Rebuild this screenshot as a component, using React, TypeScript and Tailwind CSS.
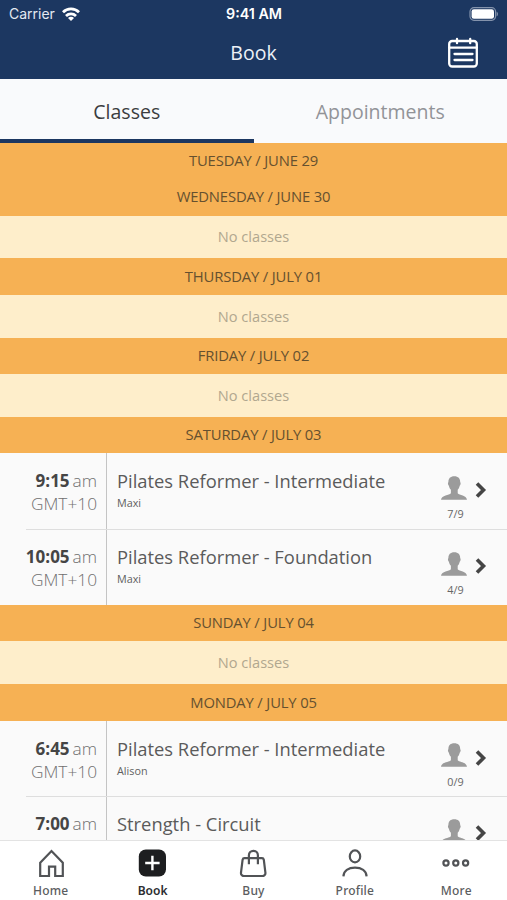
import type { ReactNode } from 'react'

type ClassItem = {
  time: string
  zone?: string
  title: string
  teacher?: string
  booked?: string
}

type Day = {
  label: string
  classes?: ClassItem[]
  hideEmpty?: boolean
}

const days: Day[] = [
  { label: 'TUESDAY / JUNE 29', hideEmpty: true },
  { label: 'WEDNESDAY / JUNE 30' },
  { label: 'THURSDAY / JULY 01' },
  { label: 'FRIDAY / JULY 02' },
  {
    label: 'SATURDAY / JULY 03',
    classes: [
      { time: '9:15', zone: 'GMT+10', title: 'Pilates Reformer - Intermediate', teacher: 'Maxi', booked: '7/9' },
      { time: '10:05', zone: 'GMT+10', title: 'Pilates Reformer - Foundation', teacher: 'Maxi', booked: '4/9' },
    ],
  },
  { label: 'SUNDAY / JULY 04' },
  {
    label: 'MONDAY / JULY 05',
    classes: [
      { time: '6:45', zone: 'GMT+10', title: 'Pilates Reformer - Intermediate', teacher: 'Alison', booked: '0/9' },
      { time: '7:00', title: 'Strength - Circuit' },
    ],
  },
]

export default function App() {
  return (
    <div className="flex h-[900px] w-[507px] flex-col overflow-hidden bg-white font-['Open_Sans',sans-serif]">
      <Header />
      <Tabs />
      <main className="min-h-0 flex-1 overflow-hidden bg-[#fafafa]">
        {days.map((day) => (
          <section key={day.label}>
            <h2 className="flex h-[36.5px] items-center justify-center bg-[#f6b154] pb-[1.4px] text-[14.8px] tracking-[-0.15px] text-[#65502f]">
              {day.label}
            </h2>
            {day.classes?.map((item, i) => (
              <ClassRow key={item.time} item={item} divided={i > 0} />
            ))}
            {!day.classes && !day.hideEmpty && (
              <p className="flex h-[42.8px] items-center justify-center bg-[#feeecb] pt-[0.6px] text-[14.6px] text-[#b1a78f]">
                No classes
              </p>
            )}
          </section>
        ))}
      </main>
      <TabBar />
    </div>
  )
}

function Header() {
  return (
    <header className="h-[79px] shrink-0 bg-[#1c3761] text-white">
      <div className="grid h-[27px] grid-cols-3 items-center px-[9px] font-[Inter,sans-serif] text-[14px]">
        <div className="flex items-center gap-[7px] text-[#e4e9f1]">
          Carrier
          <WifiIcon />
        </div>
        <p className="pl-px text-center text-[14.3px] font-semibold">9:41 AM</p>
        <div className="flex justify-end">
          <BatteryIcon />
        </div>
      </div>
      <div className="grid h-[51px] grid-cols-3 items-center">
        <h1 className="col-start-2 text-center text-[19.5px] text-[#edf1f7]">Book</h1>
        <div className="flex justify-end pr-[28px]">
          <CalendarIcon />
        </div>
      </div>
    </header>
  )
}

function Tabs() {
  return (
    <div className="grid h-[63.5px] shrink-0 grid-cols-2 bg-[#f9fafc] text-center text-[19.5px]">
      <div className="flex items-center justify-center border-b-4 border-[#1c3761] pt-[5px] text-[#3b3d40]">
        Classes
      </div>
      <div className="flex items-center justify-center pt-px text-[#929398]">Appointments</div>
    </div>
  )
}

function ClassRow({ item, divided }: { item: ClassItem; divided: boolean }) {
  return (
    <div className="relative flex h-[75.7px]">
      {divided && <span className="absolute top-0 right-0 left-[26px] h-px bg-[#dedede]" />}
      <div className="w-[107px] shrink-0 border-r border-[#c4c4c4] pt-[16px] pr-[9px] text-right text-[17.3px] leading-[23px] text-[#707070]">
        <p className="whitespace-nowrap">
          <span className="text-[17px] font-bold text-[#454545]">{item.time}</span>
          <span className="ml-[3px] font-light">am</span>
        </p>
        {item.zone && <p className="font-light">{item.zone}</p>}
      </div>
      <div className="flex-1 pt-[16px] pl-[10px]">
        <h3 className="text-[18.35px] leading-[23px] whitespace-nowrap text-[#5b5b5b]">{item.title}</h3>
        {item.teacher && <p className="mt-[4px] text-[10.8px] leading-[14px] text-[#5f5f5f]">{item.teacher}</p>}
      </div>
      <div className="w-[28px] shrink-0 pt-[22.5px] text-center">
        <PersonIcon />
        {item.booked && (
          <p className="mt-[7.5px] pl-[3px] text-[10.8px] leading-[14px] text-[#666]">{item.booked}</p>
        )}
      </div>
      <div className="w-[39px] shrink-0 pt-[29px] pl-[7px]">
        <ChevronIcon />
      </div>
    </div>
  )
}

function TabBar() {
  return (
    <nav className="grid h-[60px] shrink-0 grid-cols-5 border-t border-[#e3e3e3] bg-white">
      <TabItem label="Home">
        <path d="M3.2 13.7 14.5 2l11.3 11.7V27h-7.6v-9.3H12V27H3.2z" />
      </TabItem>
      <TabItem label="Book" active>
        <rect x="0.8" y="0.5" width="27.2" height="27" rx="7" fill="#1d1e20" stroke="none" />
        <path d="M14.4 6.8v14.4M7.2 14h14.4" stroke="#fff" strokeWidth="2.4" />
      </TabItem>
      <TabItem label="Buy">
        <path d="M5.5 9.2h17.4a1.9 1.9 0 0 1 1.9 1.5l1.6 13a3 3 0 0 1-3 3.4H5a3 3 0 0 1-3-3.4l1.6-13a1.9 1.9 0 0 1 1.9-1.5z" />
        <path d="M9.9 15.2V6.3a4.5 4.5 0 0 1 9 0v8.9" />
      </TabItem>
      <TabItem label="Profile">
        <ellipse cx="14" cy="7.4" rx="5.2" ry="6" />
        <path d="M2.4 27.3c.4-5.4 5-8.6 11.600-8.600s11.200 3.200 11.600 8.600" />
      </TabItem>
      <TabItem label="More">
        <circle cx="4" cy="14" r="2.6" />
        <circle cx="13.8" cy="14" r="2.6" />
        <circle cx="23.6" cy="14" r="2.6" />
      </TabItem>
    </nav>
  )
}

function TabItem({ label, active, children }: { label: string; active?: boolean; children: ReactNode }) {
  return (
    <div className="flex flex-col items-center pt-[8px]">
      <svg viewBox="0 0 28 28" fill="none" stroke="#515356" strokeWidth="2.2" className="h-7 w-7">
        {children}
      </svg>
      <span
        className={`mt-[6px] font-['Noto_Sans',sans-serif] text-[12px] leading-[16px] ${
          active ? 'pl-px font-semibold text-[#2d2e30]' : 'font-medium tracking-[0.2px] text-[#5b5d60]'
        }`}
      >
        {label}
      </span>
    </div>
  )
}

function WifiIcon() {
  return (
    <svg viewBox="0 0 18 14" fill="none" stroke="#fff" strokeWidth="2.8" className="h-[14px] w-[18px]">
      <path d="M1 5.2a11.5 11.5 0 0 1 16 0M4 8.9a7.2 7.2 0 0 1 10 0" />
      <path d="m9 14-3-3a4.2 4.2 0 0 1 6 0z" fill="#fff" stroke="none" />
    </svg>
  )
}

function BatteryIcon() {
  return (
    <svg viewBox="0 0 31 14" className="h-[14px] w-[31px]">
      <rect x="3" y="0.7" width="25.6" height="12.6" rx="4" fill="none" stroke="#8493ac" strokeWidth="1.2" />
      <rect x="4.6" y="2.3" width="22.4" height="9.4" rx="2.3" fill="#fff" />
      <path d="M29.6 4.7c1.8.6 1.8 4 0 4.6z" fill="#8493ac" />
    </svg>
  )
}

function CalendarIcon() {
  return (
    <svg viewBox="0 0 32 32" fill="none" stroke="#fff" strokeWidth="2.3" strokeLinecap="round" className="h-8 w-8">
      <rect x="2.2" y="4" width="27.6" height="25.5" rx="3" />
      <path d="M2.2 10.6h27.6M7.5 17h18M7.5 23h18M10 2v4.2M23.2 2v4.2" />
    </svg>
  )
}

function PersonIcon() {
  return (
    <svg viewBox="0 0 26 24" fill="#9b9b9b" className="mx-auto h-6 w-[26px]">
      <path d="M13.3.3c4 0 6 2.2 5.9 5.9.8.4.5 2.6-.5 3.5-.4 2-1.100 3.100-2 4v3.500c1.600 2 8.700 1.800 9.300 6.500H0c.6-4.700 8.200-4.500 9.900-6.500v-3.500c-.9-.9-1.600-2-2-4-1-.9-1.300-3.100-.5-3.500C7.300 2.500 9.300.3 13.300.3z" />
    </svg>
  )
}

function ChevronIcon() {
  return (
    <svg viewBox="0 0 12 16" fill="none" stroke="#454545" strokeWidth="3.6" className="h-4 w-3">
      <path d="m2 1.5 6.5 6.5L2 14.5" />
    </svg>
  )
}
